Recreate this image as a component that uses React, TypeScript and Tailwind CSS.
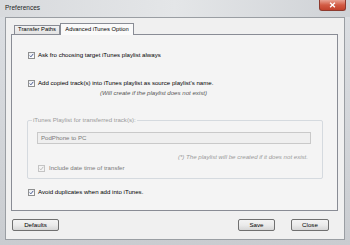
import React from 'react';

const CheckBox = ({ disabled = false }: { disabled?: boolean }) => (
  <span
    className={`relative shrink-0 w-[7px] h-[7px] border ${
      disabled ? 'border-[#c4c4c4] bg-[#f4f4f4]' : 'border-[#8e8f8f] bg-gradient-to-br from-[#e9ecef] to-[#ffffff]'
    }`}
  >
    <svg viewBox="0 0 7 7" className="absolute inset-0 w-[5px] h-[5px] m-auto">
      <path
        d="M1 3.6 L2.7 5.3 L6 1.2"
        fill="none"
        stroke={disabled ? '#b5b5b5' : '#3b4f8a'}
        strokeWidth={1.3}
      />
    </svg>
  </span>
);

const Button = ({ label, width }: { label: string; width: string }) => (
  <button
    type="button"
    className={`${width} h-[12px] flex items-center justify-center rounded-[2px] border border-[#707070] bg-gradient-to-b from-[#f3f3f3] via-[#ebebeb] to-[#d6d6d6] text-black text-[6.2px] leading-none`}
  >
    {label}
  </button>
);

export default function App() {
  return (
    <div
      className="w-[350px] h-[245px] flex flex-col overflow-hidden bg-gradient-to-b from-[#dcdfe3] via-[#d3d6da] to-[#c9ccd0] text-[6.1px] text-black leading-none"
      style={{ fontFamily: '"Liberation Sans", Arial, sans-serif' }}
    >
      {/* title bar */}
      <div className="relative h-[17px] shrink-0 flex items-center pl-[5px] bg-gradient-to-r from-[#d8dadd] via-[#e4e6e8] to-[#cfd2d6]">
        <span className="text-[6.5px] text-[#1e1e1e]">Preferences</span>
        <div className="absolute right-[4px] top-0 w-[27px] h-[11px] flex items-center justify-center rounded-b-[3px] border border-t-0 border-[#8d3a2e] bg-gradient-to-b from-[#e8a293] via-[#d25b44] to-[#c2412b]">
          <svg viewBox="0 0 8 7" className="w-[7px] h-[6px]">
            <path d="M1.2 1 L6.8 6 M6.8 1 L1.2 6" stroke="#ffffff" strokeWidth={1.6} />
          </svg>
        </div>
      </div>

      {/* dialog body */}
      <div className="flex-1 mx-[5px] mb-[5px] flex flex-col bg-[#f0f0f0] border border-[#9a9ea3]">
        <div className="pt-[5px] pl-[5px] pr-[6px]">
          <div className="flex items-end h-[11px] pl-[3px]">
            <div className="w-[46px] h-[9px] flex items-center justify-center border border-b-0 border-[#898c95] bg-gradient-to-b from-[#f2f2f2] to-[#e3e3e3] text-[5.8px]">
              Transfer Paths
            </div>
            <div className="w-[74px] h-[12px] -mb-px relative z-10 flex items-center justify-center border border-b-0 border-[#898c95] bg-[#fafafa] text-[5.8px]">
              Advanced iTunes Option
            </div>
          </div>
          <div className="h-[177px] border border-[#898c95] bg-[#f4f4f4] flex flex-col pl-[16px]">
            <div className="mt-[16px] h-[8px] flex items-center gap-[3px]">
              <CheckBox />
              <span>Ask fro choosing target iTunes playlist always</span>
            </div>
            <div className="mt-[20px] h-[8px] flex items-center gap-[3px]">
              <CheckBox />
              <span>Add copied track(s) into iTunes playlist as source playlist's name.</span>
            </div>
            <div className="mt-[2px] h-[8px] flex items-center pl-[72px] italic text-[#555555]">
              (Will create if the playlist does not exist)
            </div>

            <div className="relative mt-[23px] -ml-px w-[296px] h-[59px] rounded-[2px] border border-[#d5dadf] flex flex-col">
              <span className="absolute left-[4px] -top-[4px] px-[1px] bg-[#f4f4f4] text-[#9a9a9a]">
                iTunes Playlist for transferred track(s):
              </span>
              <div className="mt-[11px] ml-[9px] w-[274px] h-[12px] flex items-center pl-[3px] border border-[#c9c9c9] bg-[#efefef] text-[#7a7a7a]">
                PodPhone to PC
              </div>
              <div className="mt-[9px] h-[8px] flex items-center justify-end pr-[14px] italic text-[#9a9a9a]">
                (*) The playlist will be created if it does not exist.
              </div>
              <div className="mt-[3px] ml-[10px] h-[8px] flex items-center gap-[4px] text-[#7a7a7a]">
                <CheckBox disabled />
                <span>Include date time of transfer</span>
              </div>
            </div>

            <div className="mt-[9px] h-[8px] flex items-center gap-[3px]">
              <CheckBox />
              <span>Avoid duplicates when add into iTunes.</span>
            </div>
          </div>
        </div>

        <div className="mt-[8px] flex items-center pl-[6px] pr-[15px]">
          <Button label="Defaults" width="w-[47px]" />
          <div className="flex-1" />
          <Button label="Save" width="w-[37px]" />
          <div className="w-[16px]" />
          <Button label="Close" width="w-[38px]" />
        </div>
      </div>
    </div>
  );
}
